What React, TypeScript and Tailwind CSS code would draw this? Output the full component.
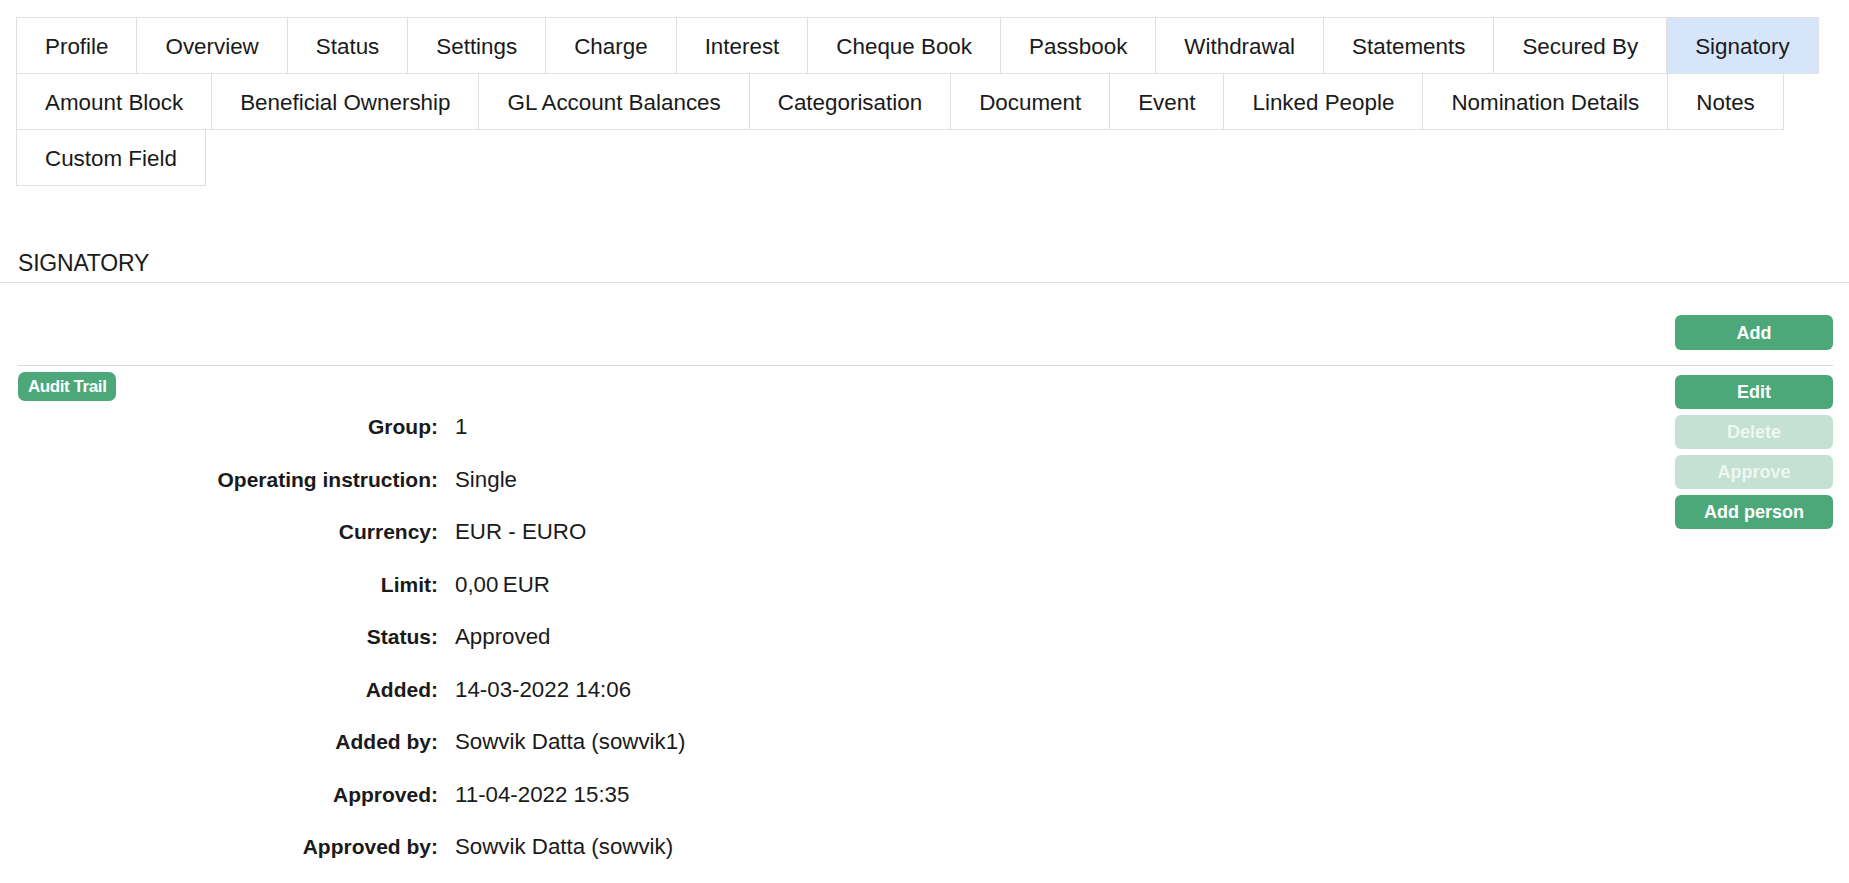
import { clsx } from "clsx";

const tabRows: string[][] = [
  [
    "Profile",
    "Overview",
    "Status",
    "Settings",
    "Charge",
    "Interest",
    "Cheque Book",
    "Passbook",
    "Withdrawal",
    "Statements",
    "Secured By",
    "Signatory",
  ],
  [
    "Amount Block",
    "Beneficial Ownership",
    "GL Account Balances",
    "Categorisation",
    "Document",
    "Event",
    "Linked People",
    "Nomination Details",
    "Notes",
  ],
  ["Custom Field"],
];

const activeTab = "Signatory";

const details: [string, string][] = [
  ["Group", "1"],
  ["Operating instruction", "Single"],
  ["Currency", "EUR - EURO"],
  ["Limit", "0,00\u2009EUR"],
  ["Status", "Approved"],
  ["Added", "14-03-2022 14:06"],
  ["Added by", "Sowvik Datta (sowvik1)"],
  ["Approved", "11-04-2022 15:35"],
  ["Approved by", "Sowvik Datta (sowvik)"],
];

const ActionButton = ({
  label,
  disabled = false,
  tall = false,
}: {
  label: string;
  disabled?: boolean;
  tall?: boolean;
}) => (
  <button
    type="button"
    disabled={disabled}
    className={clsx(
      "w-[158px] rounded-md text-[18px] font-bold leading-none",
      tall ? "h-[35px]" : "h-[34px]",
      disabled
        ? "cursor-default bg-[#c4e1d3] text-[#eef7f2]"
        : "bg-[#4ca879] text-white",
    )}
  >
    {label}
  </button>
);

export default function App() {
  return (
    <div
      className="min-h-screen bg-white text-[#1a1a1a]"
      style={{ fontFamily: '"Liberation Sans", Arial, sans-serif' }}
    >
      {/* tabs */}
      <div className="px-4 pt-[17px]">
        {tabRows.map((row, i) => (
          <div key={i} className={clsx("flex", i > 0 && "-mt-px")}>
            {row.map((name, j) => (
              <button
                type="button"
                key={name}
                className={clsx(
                  "whitespace-nowrap border border-[#e0e0e0] px-7 pt-[11px] pb-[9px] text-[22.4px] leading-[35px] text-[#1a1a1a]",
                  j > 0 && "-ml-px",
                  name === activeTab ? "bg-[#d7e5fb]" : "bg-white",
                )}
              >
                {name}
              </button>
            ))}
          </div>
        ))}
      </div>

      {/* section heading */}
      <div className="mt-[62px] border-b border-[#e0e0e0] pb-[4px] pl-[18px]">
        <h2 className="text-[23px] font-normal leading-[30px] tracking-[-0.2px]">
          SIGNATORY
        </h2>
      </div>

      <div className="ml-[18px] mr-4">
        <div className="flex justify-end border-b border-[#d9d9d9] pt-[32px] pb-[15px]">
          <ActionButton label="Add" tall />
        </div>

        <div className="flex items-start justify-between pt-[6px]">
          <div className="flex-1">
            <span className="inline-block rounded-[7px] bg-[#4ca879] px-[10px] text-[17px] font-bold leading-[29px] tracking-tight text-white">
              Audit Trail
            </span>
            <div className="grid grid-cols-[420px_1fr] gap-x-[17px]">
              {details.map(([label, value]) => (
                <div key={label} className="contents">
                  <div className="py-[10px] text-right text-[21px] font-bold leading-[32.5px]">
                    {label}:
                  </div>
                  <div className="py-[10px] text-[22.3px] leading-[32.5px]">
                    {value}
                  </div>
                </div>
              ))}
            </div>
          </div>
          <div className="mt-[3px] flex flex-col gap-[6px]">
            <ActionButton label="Edit" />
            <ActionButton label="Delete" disabled />
            <ActionButton label="Approve" disabled />
            <ActionButton label="Add person" />
          </div>
        </div>
      </div>
    </div>
  );
}
